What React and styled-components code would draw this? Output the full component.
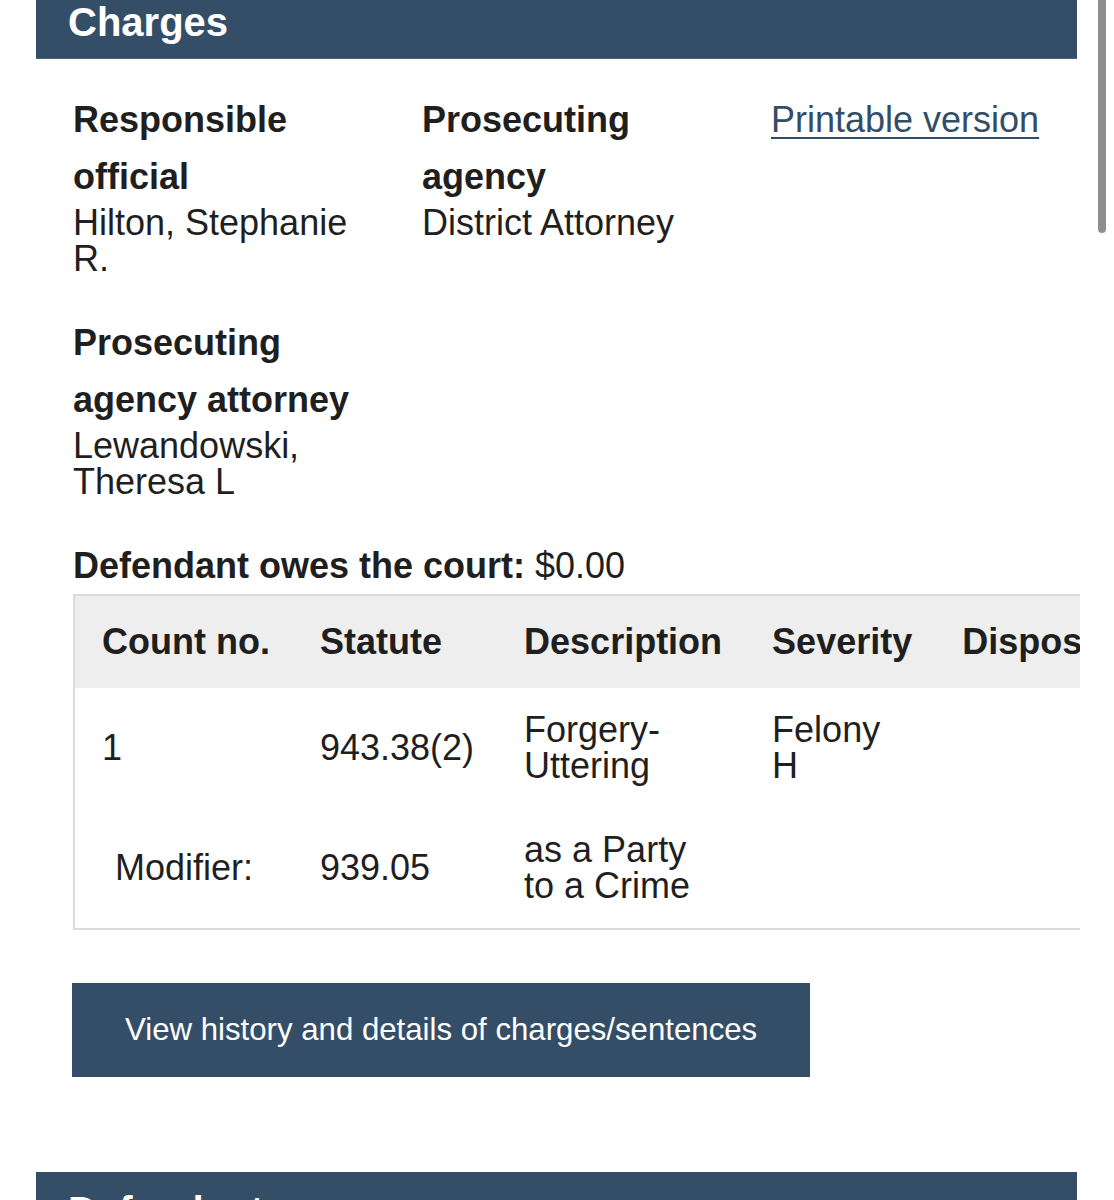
import React from 'react'
import styled, { createGlobalStyle } from 'styled-components'

const GlobalStyle = createGlobalStyle`
  html, body {
    margin: 0;
    padding: 0;
    overflow: hidden;
    background: #ffffff;
  }
  body {
    font-family: 'Liberation Sans', Arial, Helvetica, sans-serif;
    font-size: 36px;
    color: #1f1f1f;
  }
  * { box-sizing: border-box; }
`

const Page = styled.div`
  position: relative;
  width: 1114px;
  height: 1200px;
  overflow: hidden;
`

const Section = styled.section`
  margin: ${(p) => (p.$next ? '95px' : '0')} 37px 0 36px;
`

const SectionHeader = styled.h2`
  margin: 0;
  background-color: #354e67;
  border-bottom: 1px solid #4b6278;
  color: #ffffff;
  font-size: 40px;
  font-weight: bold;
  line-height: 44px;
  padding: ${(p) => p.$top || 0}px 32px 14px;
`

const Content = styled.div`
  padding: 32px 0 0 37px;
  display: flex;
  flex-direction: column;
`

const InfoGrid = styled.div`
  display: grid;
  grid-template-columns: 309px 309px 1fr;
  column-gap: 40px;
  row-gap: 37px;
`

const Field = styled.div`
  display: flex;
  flex-direction: column;
`

const Label = styled.div`
  font-weight: bold;
  line-height: 57px;
`

const Value = styled.div`
  line-height: 36px;
`

const PrintLink = styled.a`
  color: #344d66;
  text-decoration: underline;
  text-decoration-thickness: 2px;
  text-underline-offset: 5px;
  line-height: 57px;
  white-space: nowrap;
`

const Owes = styled.p`
  margin: 37px 0 0;
  line-height: 57px;

  strong { font-weight: bold; }
`

const TableScroll = styled.div`
  width: 1007px;
  overflow: hidden;
`

const Table = styled.table`
  width: 1px;
  border-collapse: collapse;
  border: 2px solid #dcdcdc;
`

const Th = styled.th`
  background-color: #eeeeee;
  font-weight: bold;
  text-align: left;
  white-space: nowrap;
  line-height: 36px;
  padding: 28px 23px 28px 27px;
`

const Td = styled.td`
  line-height: 36px;
  vertical-align: middle;
  padding: 24px 23px 24px ${(p) => (p.$indent ? '40px' : '27px')};
`

const ActionButton = styled.button`
  align-self: flex-start;
  margin-top: 53px;
  margin-left: -1px;
  background-color: #354e67;
  color: #ffffff;
  border: none;
  border-radius: 0;
  font-family: inherit;
  font-size: 31.2px;
  line-height: 36px;
  padding: 29px 53px;
  cursor: pointer;
`

const ScrollThumb = styled.div`
  position: absolute;
  top: -6px;
  right: 8px;
  width: 8px;
  height: 239px;
  border-radius: 4px;
  background-color: #8f8f8f;
`

const charges = [
  { count: '1', statute: '943.38(2)', description: 'Forgery-Uttering', severity: 'Felony H', disposition: '' },
  { count: 'Modifier:', statute: '939.05', description: 'as a Party to a Crime', severity: '', disposition: '', modifier: true },
]

export default function App() {
  return (
    <Page>
      <GlobalStyle />
      <Section>
        <SectionHeader>Charges</SectionHeader>
        <Content>
          <InfoGrid>
            <Field>
              <Label>Responsible official</Label>
              <Value>Hilton, Stephanie R.</Value>
            </Field>
            <Field>
              <Label>Prosecuting agency</Label>
              <Value>District Attorney</Value>
            </Field>
            <Field>
              <PrintLink href="#">Printable version</PrintLink>
            </Field>
            <Field>
              <Label>Prosecuting agency attorney</Label>
              <Value>Lewandowski, Theresa L</Value>
            </Field>
          </InfoGrid>

          <Owes>
            <strong>Defendant owes the court:</strong> $0.00
          </Owes>

          <TableScroll>
            <Table>
              <thead>
                <tr>
                  <Th>Count no.</Th>
                  <Th>Statute</Th>
                  <Th>Description</Th>
                  <Th>Severity</Th>
                  <Th>Disposition</Th>
                </tr>
              </thead>
              <tbody>
                {charges.map((c, i) => (
                  <tr key={i}>
                    <Td $indent={c.modifier}>{c.count}</Td>
                    <Td>{c.statute}</Td>
                    <Td>{c.description}</Td>
                    <Td>{c.severity}</Td>
                    <Td>{c.disposition}</Td>
                  </tr>
                ))}
              </tbody>
            </Table>
          </TableScroll>

          <ActionButton>View history and details of charges/sentences</ActionButton>
        </Content>
      </Section>

      <Section $next>
        <SectionHeader $top={17}>Defendant</SectionHeader>
      </Section>

      <ScrollThumb />
    </Page>
  )
}
